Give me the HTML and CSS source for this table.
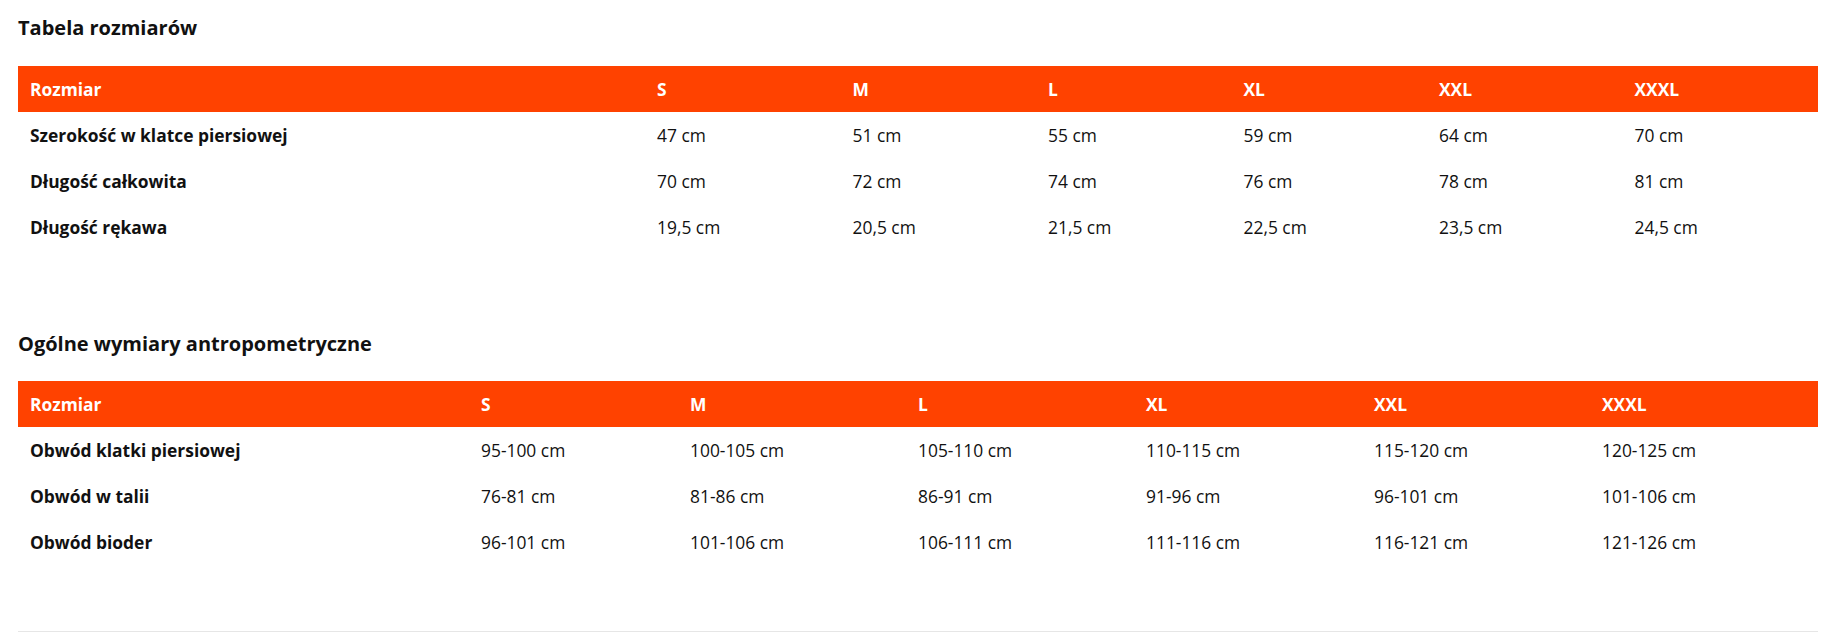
FILE: index.html
```html
<!DOCTYPE html>
<html lang="pl">
<head>
<meta charset="utf-8">
<title>Tabela rozmiarów</title>
<link rel="stylesheet" href="styles.css">
</head>
<body>
<main class="page">
  <section class="size-section">
    <h2 class="section-title">Tabela rozmiarów</h2>
    <table class="size-table size-table--garment">
      <colgroup>
        <col class="col-label">
        <col class="col-size"><col class="col-size"><col class="col-size">
        <col class="col-size"><col class="col-size"><col class="col-size">
      </colgroup>
      <thead>
        <tr><th>Rozmiar</th><th>S</th><th>M</th><th>L</th><th>XL</th><th>XXL</th><th>XXXL</th></tr>
      </thead>
      <tbody>
        <tr><th>Szerokość w klatce piersiowej</th><td>47 cm</td><td>51 cm</td><td>55 cm</td><td>59 cm</td><td>64 cm</td><td>70 cm</td></tr>
        <tr><th>Długość całkowita</th><td>70 cm</td><td>72 cm</td><td>74 cm</td><td>76 cm</td><td>78 cm</td><td>81 cm</td></tr>
        <tr><th>Długość rękawa</th><td>19,5 cm</td><td>20,5 cm</td><td>21,5 cm</td><td>22,5 cm</td><td>23,5 cm</td><td>24,5 cm</td></tr>
      </tbody>
    </table>
  </section>

  <section class="size-section size-section--second">
    <h2 class="section-title">Ogólne wymiary antropometryczne</h2>
    <table class="size-table size-table--body">
      <colgroup>
        <col class="col-label">
        <col class="col-first">
        <col class="col-size"><col class="col-size"><col class="col-size">
        <col class="col-size"><col class="col-size">
      </colgroup>
      <thead>
        <tr><th>Rozmiar</th><th>S</th><th>M</th><th>L</th><th>XL</th><th>XXL</th><th>XXXL</th></tr>
      </thead>
      <tbody>
        <tr><th>Obwód klatki piersiowej</th><td>95-100 cm</td><td>100-105 cm</td><td>105-110 cm</td><td>110-115 cm</td><td>115-120 cm</td><td>120-125 cm</td></tr>
        <tr><th>Obwód w talii</th><td>76-81 cm</td><td>81-86 cm</td><td>86-91 cm</td><td>91-96 cm</td><td>96-101 cm</td><td>101-106 cm</td></tr>
        <tr><th>Obwód bioder</th><td>96-101 cm</td><td>101-106 cm</td><td>106-111 cm</td><td>111-116 cm</td><td>116-121 cm</td><td>121-126 cm</td></tr>
      </tbody>
    </table>
  </section>
  <hr class="divider">
</main>
</body>
</html>
```

FILE: styles.css
```css
* {
  box-sizing: border-box;
}

html, body {
  margin: 0;
  padding: 0;
  background: #ffffff;
}

body {
  font-family: "Open Sans", "Liberation Sans", Arial, sans-serif;
  color: #111111;
  font-size: 17px;
}

.page {
  padding: 0 14px 0 18px;
}

.section-title {
  margin: 16px 0 26px;
  font-size: 20px;
  line-height: 24px;
  font-weight: 700;
  color: #111111;
}

.size-section--second {
  margin-top: 82px;
}

.size-section--second .section-title {
  margin-top: 0;
  margin-bottom: 25px;
}

.size-table {
  width: 1800px;
  border-collapse: collapse;
  table-layout: fixed;
  font-size: 17.4px;
}

.size-table th,
.size-table td {
  height: 46px;
  padding: 0 12px;
  text-align: left;
  vertical-align: middle;
  line-height: 23px;
  white-space: nowrap;
}

.size-table thead th {
  background: #ff4200;
  color: #ffffff;
  font-weight: 700;
}

.size-table tbody th {
  font-weight: 700;
  color: #111111;
}

.size-table tbody td {
  font-weight: 400;
  color: #111111;
}

.size-table--garment .col-label {
  width: 627px;
}

.size-table--garment .col-size {
  width: 195.5px;
}

.size-table--body .col-label {
  width: 451px;
}

.size-table--body .col-first {
  width: 209px;
}

.size-table--body .col-size {
  width: 228px;
}

.divider {
  width: 1800px;
  margin: 66px 0 0;
  border: 0;
  border-top: 1px solid #e6e6e6;
  height: 0;
}
```
